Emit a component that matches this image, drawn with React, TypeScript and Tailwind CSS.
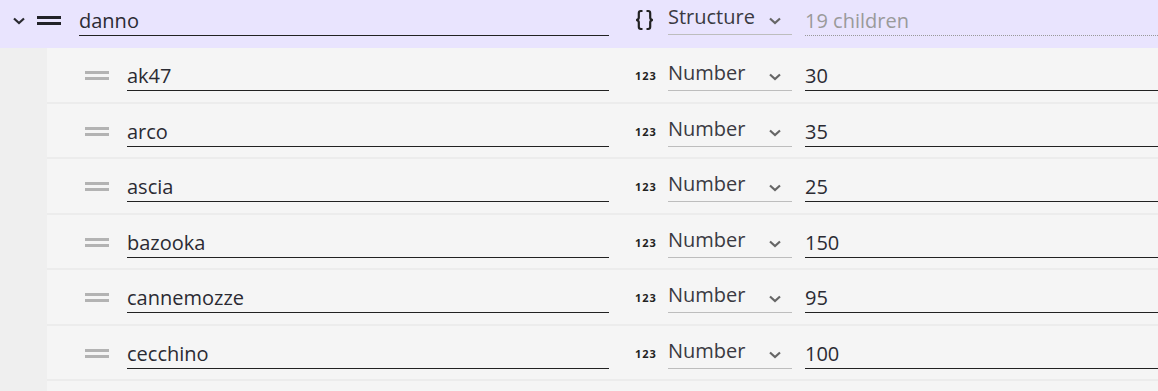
import React from "react";

const rows = [
  { name: "ak47", value: "30" },
  { name: "arco", value: "35" },
  { name: "ascia", value: "25" },
  { name: "bazooka", value: "150" },
  { name: "cannemozze", value: "95" },
  { name: "cecchino", value: "100" },
];

function Chevron({ className }: { className: string }) {
  return (
    <svg width="14" height="8" viewBox="0 0 14 8" className={className}>
      <path d="M2 1.5 L7 6 L12 1.5" fill="none" stroke="currentColor" strokeWidth="2.2" />
    </svg>
  );
}

function Braces() {
  return (
    <svg width="21" height="22" viewBox="0 0 21 22" className="text-[#222]">
      <g fill="none" stroke="currentColor" strokeWidth="2.2">
        <path d="M8.5 2 H6.8 C5.4 2 4.8 2.8 4.8 4.2 V8.6 C4.8 10 4 10.8 2.2 11 C4 11.2 4.8 12 4.8 13.4 V17.8 C4.8 19.2 5.4 20 6.8 20 H8.5" />
        <path d="M12.5 2 H14.2 C15.6 2 16.2 2.8 16.2 4.2 V8.6 C16.2 10 17 10.8 18.8 11 C17 11.2 16.2 12 16.2 13.4 V17.8 C16.2 19.2 15.6 20 14.2 20 H12.5" />
      </g>
    </svg>
  );
}

function Handle({ color }: { color: string }) {
  return (
    <div className="flex w-6 flex-col gap-[3px]">
      <div className={`h-[3px] ${color}`} />
      <div className={`h-[3px] ${color}`} />
    </div>
  );
}

function Select({ label, top }: { label: string; top: string }) {
  return (
    <div className={`${top} flex h-[28px] w-[124px] items-start justify-between border-b border-[#bdbdbd] leading-[26px]`}>
      <span className="-mt-[3px] text-[#3a3a42]">{label}</span>
      <Chevron className="mr-[10px] mt-[10px] text-[#666]" />
    </div>
  );
}

function Row({ name, value }: { name: string; value: string }) {
  return (
    <div className="flex h-[55.5px] border-b-2 border-[#ececec] bg-[#f5f5f5]">
      <div className="ml-[38px] mt-[23px] self-start">
        <Handle color="bg-[#b3b3b3]" />
      </div>
      <div className="ml-[18px] mt-[15px] h-[28px] flex-1 border-b border-[#222] leading-[26px]">{name}</div>
      <div className="ml-[26px] mt-[21px] w-[33px] text-[11px] font-bold leading-[14px] tracking-[1px] text-[#222]">123</div>
      <Select label="Number" top="mt-[15px]" />
      <div className="ml-[13px] mt-[15px] h-[28px] w-[353px] border-b border-[#222] leading-[26px]">{value}</div>
    </div>
  );
}

export default function App() {
  return (
    <div className="h-[391px] w-[1158px] overflow-hidden bg-[#efefef] text-[20px] text-[#2b2b33]" style={{ fontFamily: '"Open Sans", sans-serif' }}>
      <div className="flex h-[48px] bg-[#e9e4fe]">
        <Chevron className="ml-[12px] mt-[17px] text-[#2a2a30]" />
        <div className="ml-[11px] mt-[16px] self-start">
          <Handle color="bg-[#222228]" />
        </div>
        <div className="ml-[18px] mt-[8px] h-[28px] flex-1 border-b border-[#222] leading-[26px]">danno</div>
        <div className="ml-[25px] mt-[9px] w-[34px]">
          <Braces />
        </div>
        <Select label="Structure" top="mt-[7px]" />
        <div className="ml-[13px] mt-[8px] h-[28px] w-[353px] border-b border-dotted border-[#999] leading-[26px] text-[#9a9a9a]">19 children</div>
      </div>
      <div className="ml-[47px]">
        {rows.map((r) => (
          <Row key={r.name} {...r} />
        ))}
        <div className="h-[20px] bg-[#f5f5f5]" />
      </div>
    </div>
  );
}
